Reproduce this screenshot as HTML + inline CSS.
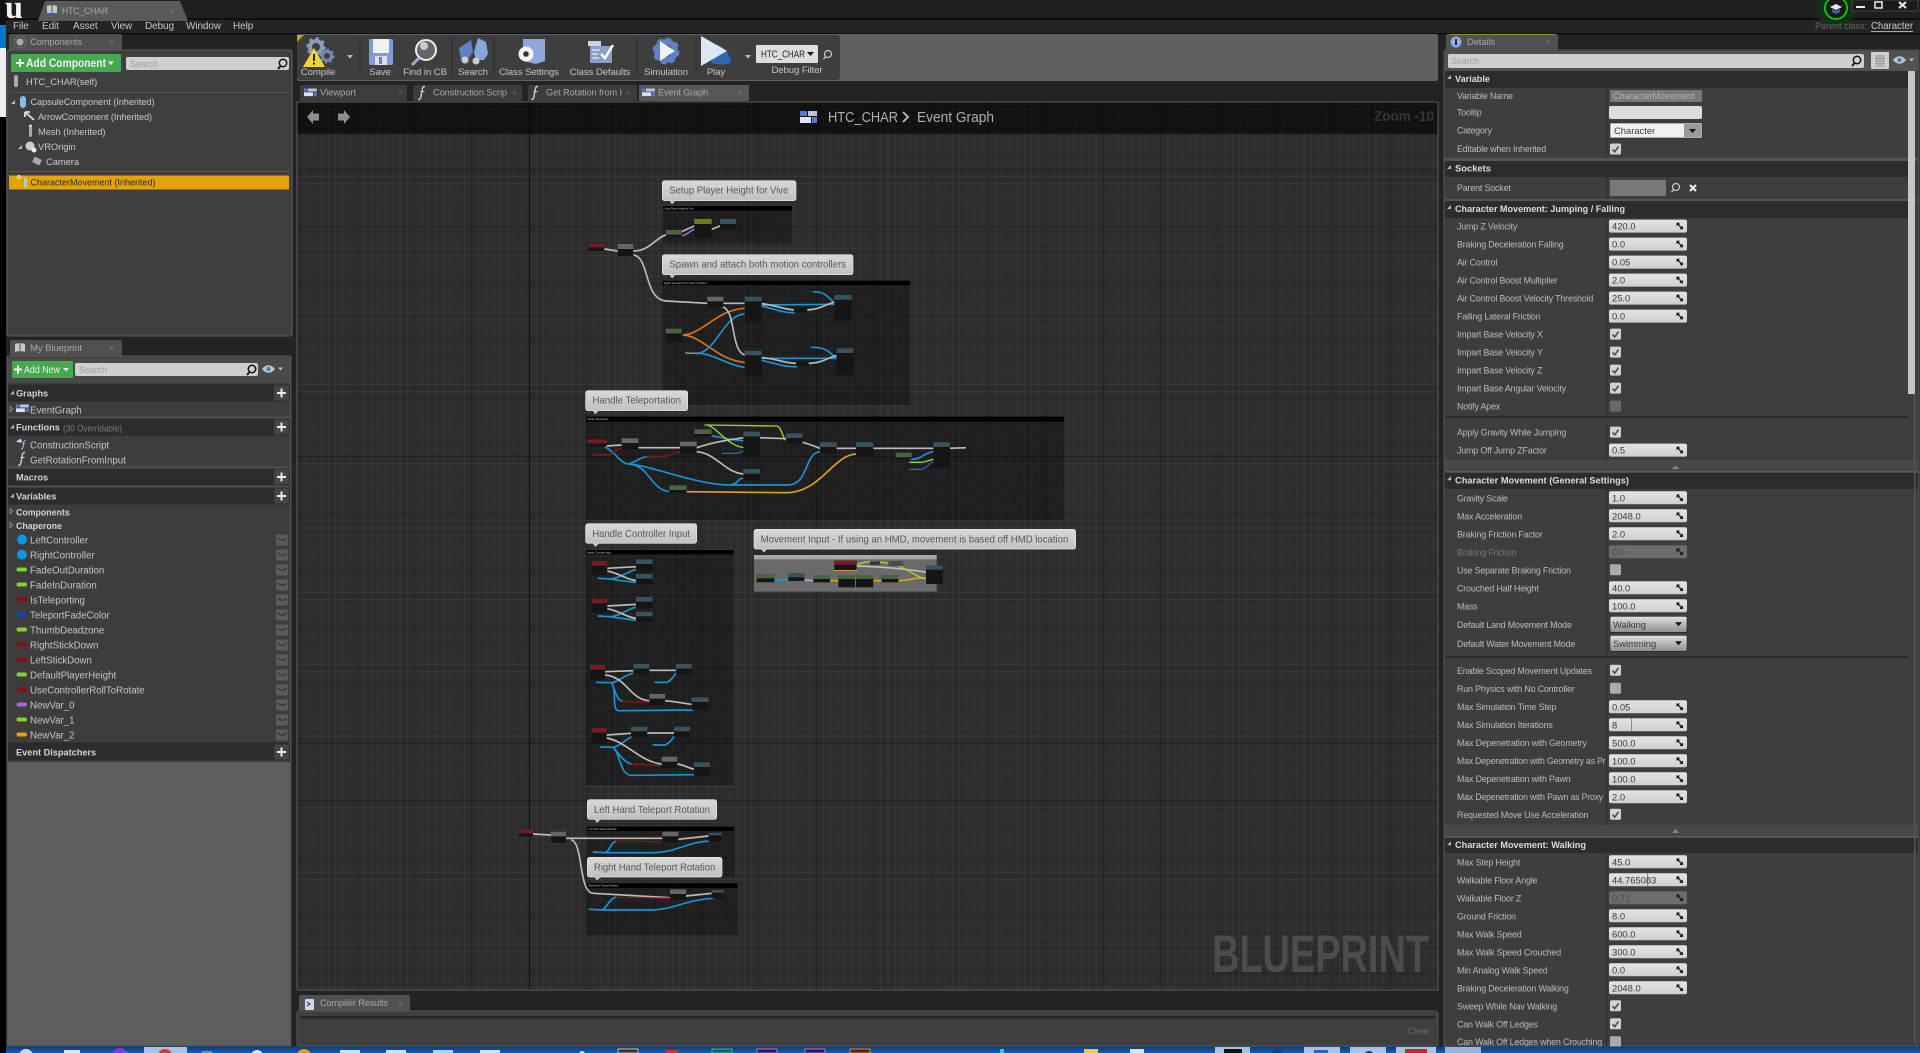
<!DOCTYPE html>
<html lang="en"><head><meta charset="utf-8"><title>HTC_CHAR</title>
<style>
html,body{margin:0;padding:0;background:#000;overflow:hidden}
svg{display:block}
text{font-family:"Liberation Sans",sans-serif;white-space:pre}
.m{font-size:10px;fill:#c6c6c6;letter-spacing:-.1px}
.t{font-size:9.5px;fill:#a8a8a8;letter-spacing:-.1px}
.c{font-size:9.4px;fill:#c8c8c8;letter-spacing:-.05px}
.s{font-size:9.7px;fill:#c6c6c6}
.h{font-size:9.2px;font-weight:bold;fill:#d4d4d4}
.tb{font-size:9.6px;fill:#c4c4c4;text-anchor:middle;letter-spacing:-.1px}
.l{font-size:8.9px;fill:#bcbcbc;letter-spacing:-.16px}
.v{font-size:9.4px;fill:#3a3a3a}
.d{font-size:9.5px;font-weight:bold;fill:#dcdcdc}
.w{fill:none;stroke:#bcbcbc;stroke-width:5;stroke-linecap:round}
.wb{fill:none;stroke:#1b93d3;stroke-width:5;stroke-linecap:round}
.wo{fill:none;stroke:#d9741f;stroke-width:5;stroke-linecap:round}
.wg{fill:none;stroke:#a3d23a;stroke-width:4;stroke-linecap:round}
.wr{fill:none;stroke:#8c1519;stroke-width:4;stroke-linecap:round}
.wy{fill:none;stroke:#dca020;stroke-width:5;stroke-linecap:round}
.wd{fill:none;stroke:#2a62c0;stroke-width:4;stroke-linecap:round}
.b{fill:#151515}.hg{fill:#666}.hb{fill:#38525f}.hn{fill:#4a6343}.hr{fill:#741c22}.hy{fill:#77771c}
.cm{fill:rgba(0,0,0,.3)}.ch{fill:#000}
.ct{font-size:7px;fill:#ccc}
.bt{font-size:29px;fill:#565656}
.sec{fill:#2c2c2c}
</style></head><body>
<svg xmlns="http://www.w3.org/2000/svg" width="1920" height="1053" viewBox="0 0 1920 1053">
<defs>
<pattern id="fine" patternUnits="userSpaceOnUse" x="529" y="169" width="7.175" height="7.175"><path d="M0 0H7.175M0 0V7.175" stroke="#3f3f3f" stroke-width="1" fill="none"/></pattern>
<pattern id="major" patternUnits="userSpaceOnUse" x="529" y="169" width="57.4" height="57.4"><path d="M0 0H57.4M0 0V57.4" stroke="#191919" stroke-width="1.2" fill="none"/></pattern>
<linearGradient id="fld" x1="0" y1="0" x2="0" y2="1"><stop offset="0" stop-color="#e4e4e4"/><stop offset="1" stop-color="#cfcfcf"/></linearGradient>
<linearGradient id="dd" x1="0" y1="0" x2="0" y2="1"><stop offset="0" stop-color="#e2e2e2"/><stop offset="1" stop-color="#8e8e8e"/></linearGradient>
<linearGradient id="bub" x1="0" y1="0" x2="0" y2="1"><stop offset="0" stop-color="#d8d8d8"/><stop offset="1" stop-color="#bdbdbd"/></linearGradient>
<linearGradient id="tbar" x1="0" y1="0" x2="0" y2="1"><stop offset="0" stop-color="#0a3a80"/><stop offset="1" stop-color="#1564ae"/></linearGradient>
<g id="arw"><path d="M0 0h3.5l-1.2 1.2 1.4 1.4-1 1-1.4-1.4L0 3.5zM6.5 6.5H3l1.2-1.2-1.4-1.4 1-1 1.4 1.4 1.2-1.2z" fill="#111"/></g>
<g id="n"><rect width="78" height="13" rx="2" fill="url(#fld)"/><use href="#arw" x="67.5" y="3.2"/></g>
<g id="nd"><rect width="78" height="13" rx="2" fill="#6c6c6c"/><use href="#arw" x="67.5" y="3.2"/></g>
<g id="cb"><rect width="11" height="11" rx="1.5" fill="#d2d2d2"/><path d="M2.5 6l2.2 2.3L8.6 3" stroke="#4a4a4a" stroke-width="1.6" fill="none"/></g>
<g id="cu"><rect width="11" height="11" rx="1.5" fill="#ababab"/></g>
<g id="cd"><rect width="11" height="11" rx="1.5" fill="#6a6a6a"/></g>
<g id="dp"><rect width="77" height="16" rx="1.5" fill="url(#dd)" stroke="#222" stroke-width=".6"/><path d="M65 6h7l-3.500 4z" fill="#111"/></g>
<g id="plus"><rect width="15" height="15" rx="1" fill="#444"/><path d="M7.500 3v9M3 7.500h9" stroke="#eee" stroke-width="2"/></g>
<g id="eyeb"><rect width="12" height="11" rx="1" fill="#5b5b5b"/><path d="M2 3.500c3 3 6 3 8.500 0" stroke="#2b2b2b" stroke-width="1" fill="none"/></g>
<g id="tri"><path d="M0 4L4 0v4z" fill="#bbb"/></g>
<g id="trr"><path d="M0 0l3 2.500L0 5z" fill="none" stroke="#999" stroke-width=".8"/></g>
<g id="mag"><circle cx="6" cy="5" r="3.700" fill="none" stroke="#111" stroke-width="1.500"/><path d="M3.500 8L1 11" stroke="#111" stroke-width="1.800"/></g>
<g id="magl"><circle cx="6" cy="5" r="3.500" fill="none" stroke="#ccc" stroke-width="1.200"/><path d="M3.500 7.800L1.500 10" stroke="#ccc" stroke-width="1.400"/></g>
<g id="eye"><path d="M0 4c4-5 9-5 13 0c-4 5-9 5-13 0z" fill="#bfc6d4"/><circle cx="6.500" cy="4" r="2.200" fill="#5878a8"/><path d="M16 2.500h5l-2.500 3z" fill="#bbb"/></g>
<g id="grd"><rect width="3" height="3" fill="#5878d8"/><rect x="3.800" width="9" height="3" fill="#b8c4e4"/><rect y="3.800" width="9" height="3.800" fill="#d8e0f4"/><rect x="9.800" y="3.800" width="3" height="3.800" fill="#5878d8"/></g>
<g id="fn"><path d="M7 0C4 0 4.500 2 4 4.500L2.800 11C2.500 12.500 1.500 13 0 13" fill="none" stroke="#c7d0ea" stroke-width="1.400"/><path d="M2.500 5h4" stroke="#c7d0ea" stroke-width="1"/></g>
<g id="bk"><path d="M0 1c2-1 4-1 5 0c1-1 3-1 5 0v8c-2-1-4-1-5 0c-1-1-3-1-5 0z" fill="#c8c8c8"/><path d="M5 1v8" stroke="#555"/></g>
</defs>

<rect width="1920" height="1053" fill="#232323"/>
<!-- title / menu -->
<rect width="1920" height="18" fill="#1f1f1f"/>
<rect y="18" width="1920" height="2" fill="#0e0e0e"/>
<rect y="20" width="1920" height="13" fill="#242424"/>
<rect y="33" width="1920" height="1.500" fill="#0c0c0c"/>
<rect x="0" y="25" width="6" height="23" fill="#0a74cc"/>
<rect x="0" y="48" width="6" height="69" fill="#eeeeee"/>
<rect x="0" y="117" width="6" height="936" fill="#000"/>
<rect x="0" y="0" width="6" height="25" fill="#111"/>
<text x="5" y="18" font-size="33" font-weight="bold" style="font-family:'Liberation Serif',serif" fill="#f2f2f2" textLength="18" lengthAdjust="spacingAndGlyphs">u</text>
<path d="M38 21L45 1H180L188 21z" fill="#5a5a5a"/>
<use href="#bk" x="47" y="5"/><rect x="47" y="13" width="10" height="2" fill="#3a5caa"/>
<text class="t" x="62" y="14" fill="#a0a0a0" textLength="46" lengthAdjust="spacingAndGlyphs">HTC_CHAR</text>
<text x="170" y="14" font-size="9" fill="#7d7d7d">×</text>
<text class="m" x="13" y="29">File</text><text class="m" x="42" y="29">Edit</text><text class="m" x="73" y="29">Asset</text><text class="m" x="111" y="29">View</text><text class="m" x="145" y="29">Debug</text><text class="m" x="186" y="29">Window</text><text class="m" x="233" y="29">Help</text>
<!-- top right -->
<circle cx="1836" cy="8" r="20" fill="#0e3a10" opacity=".6"/><circle cx="1836" cy="8" r="11" fill="#1b1b1b" stroke="#14b814" stroke-width="2"/>
<path d="M1830 7l6-3 6 3-6 3z" fill="#dfe8f4"/><path d="M1832 9v3l4 2 4-2V9l-4 2z" fill="#3a6ab0"/>
<rect x="1852" y="0" width="66" height="11" fill="#1a1a1a" stroke="#555" stroke-width=".7"/>
<rect x="1856" y="6" width="9" height="2" fill="#eee"/><rect x="1875" y="2" width="7" height="6" fill="none" stroke="#eee" stroke-width="1.500"/>
<path d="M1899 2l7 6M1906 2l-7 6" stroke="#eee" stroke-width="2"/>
<text x="1815" y="29" font-size="9.5" fill="#686868" textLength="52" lengthAdjust="spacingAndGlyphs">Parent class:</text>
<text x="1871" y="29" font-size="10" fill="#cfcfcf" textLength="42" lengthAdjust="spacingAndGlyphs">Character</text>
<rect x="1871" y="31" width="42" height="1" fill="#aaa"/>

<!-- Components panel -->
<path d="M9 50V36q0-2 2-2H120q2 0 2 2V50z" fill="#505050"/>
<circle cx="20" cy="42" r="3.500" fill="#aaa"/><circle cx="20" cy="42" r="6" fill="none" stroke="#888" stroke-dasharray="1.500 2"/>
<text class="t" x="30" y="45" fill="#b4b4b4" textLength="52" lengthAdjust="spacingAndGlyphs">Components</text>
<text x="109" y="45" font-size="9" fill="#777">×</text>
<rect x="7" y="50" width="285" height="286" rx="2" fill="#3f3f3f" stroke="#5c5c5c"/>
<rect x="11" y="54" width="110" height="18" rx="1.500" fill="#46a94f"/>
<path d="M16 63h8M20 59v8" stroke="#f2f2f2" stroke-width="2"/>
<text x="26" y="67" font-size="12" font-weight="bold" fill="#f0f0f0" textLength="80" lengthAdjust="spacingAndGlyphs">Add Component</text>
<path d="M108 61.500h6l-3 3.500z" fill="#f0f0f0"/>
<rect x="126" y="57" width="163" height="13" rx="2" fill="#cfcfcf"/>
<text x="130" y="67" font-size="9.500" fill="#9d9d9d" textLength="28" lengthAdjust="spacingAndGlyphs">Search</text>
<use href="#mag" x="277" y="58"/>
<rect x="14" y="75" width="4" height="12" rx="2" fill="#aaa"/>
<text class="c" x="26" y="85">HTC_CHAR(self)</text>
<rect x="10" y="92" width="279" height="1" fill="#555"/>
<use href="#tri" x="11" y="100"/>
<rect x="20" y="96" width="6" height="12" rx="3" fill="#8fb8e8"/>
<text class="c" x="30.500" y="105" textLength="124" lengthAdjust="spacingAndGlyphs">CapsuleComponent (Inherited)</text>
<path d="M25 112l9 8M25 112h5M25 112v5" stroke="#ddd" stroke-width="1.800" fill="none"/>
<text class="c" x="38" y="120" textLength="114" lengthAdjust="spacingAndGlyphs">ArrowComponent (Inherited)</text>
<rect x="29" y="127" width="3" height="10" rx="1.500" fill="#9ab79a"/><circle cx="30.500" cy="126" r="1.500" fill="#ddd"/>
<text class="c" x="38" y="135">Mesh (Inherited)</text>
<use href="#tri" x="18" y="145"/>
<circle cx="30" cy="146" r="4.500" fill="#ccc"/><circle cx="34" cy="150" r="2.500" fill="#eee"/>
<text class="c" x="38" y="150">VROrigin</text>
<rect x="33" y="158" width="8" height="6" fill="#aaa" transform="rotate(25 37 161)"/>
<text class="c" x="46" y="165">Camera</text>
<rect x="10" y="171" width="279" height="1" fill="#555"/>
<rect x="9" y="175.500" width="280" height="14" fill="#e2a408"/>
<circle cx="19" cy="177" r="1.500" fill="none" stroke="#eee"/><rect x="24" y="178" width="3" height="10" rx="1.500" fill="#aed2c0"/>
<text x="30.500" y="185.500" font-size="9.400" fill="#2d2d2d" textLength="125" lengthAdjust="spacingAndGlyphs">CharacterMovement (Inherited)</text>

<!-- My Blueprint -->
<path d="M10 356V342q0-2 2-2H120q2 0 2 2V356z" fill="#505050"/>
<use href="#bk" x="15" y="343"/>
<text class="t" x="30" y="351" fill="#b4b4b4" textLength="52" lengthAdjust="spacingAndGlyphs">My Blueprint</text>
<text x="109" y="351" font-size="9" fill="#777">×</text>
<rect x="7" y="356" width="284" height="690" fill="#5f5f5f" stroke="#4a4a4a"/>
<rect x="8" y="357" width="282" height="405" fill="#3d3d3d"/>
<rect x="8" y="358" width="282" height="25" fill="#4a4a4a"/>
<rect x="12" y="361" width="61" height="17" rx="1" fill="#46a94f"/>
<path d="M14 369.500h8M18 365.500v8" stroke="#f2f2f2" stroke-width="2"/>
<text x="24" y="373" font-size="10.500" fill="#eee" textLength="36" lengthAdjust="spacingAndGlyphs">Add New</text>
<path d="M63 368h6l-3 3.500z" fill="#eee"/>
<rect x="75" y="363" width="183" height="13" rx="2" fill="#cfcfcf"/>
<text x="79" y="373" font-size="9.500" fill="#9d9d9d" textLength="28" lengthAdjust="spacingAndGlyphs">Search</text>
<use href="#mag" x="246" y="364"/>
<use href="#eye" x="262" y="365"/>

<g transform="translate(0 -.5)">
<rect class="sec" x="8" y="385" width="282" height="17"/><use href="#tri" x="10" y="391"/><text class="h" x="16" y="397">Graphs</text><use href="#plus" x="274" y="386"/>
<use href="#trr" x="10" y="407"/><use href="#grd" x="16" y="405"/><text class="s" x="30" y="414">EventGraph</text>
<rect x="8" y="417" width="282" height="2" fill="#4f4f4f"/>
<rect class="sec" x="8" y="419" width="282" height="17"/><use href="#tri" x="10" y="425"/><text class="h" x="16" y="431">Functions</text><text x="63" y="432" font-size="9" fill="#7b7b7b" textLength="59" lengthAdjust="spacingAndGlyphs">(30 Overridable)</text><use href="#plus" x="274" y="420"/>
<path d="M16 442l5-3 1 4-3 0z" fill="#cbd3ea"/><g transform="translate(21 441) scale(.65)"><use href="#fn"/></g><text class="s" x="30" y="449">ConstructionScript</text>
<use href="#fn" x="18" y="453"/><text class="s" x="30" y="464">GetRotationFromInput</text>
<rect x="8" y="467" width="282" height="2" fill="#4f4f4f"/>
<rect class="sec" x="8" y="469" width="282" height="17"/><text class="h" x="16" y="481">Macros</text><use href="#plus" x="274" y="470"/>
<rect x="8" y="486" width="282" height="2" fill="#4f4f4f"/>
<rect class="sec" x="8" y="488" width="282" height="17"/><use href="#tri" x="10" y="494"/><text class="h" x="16" y="500">Variables</text><use href="#plus" x="274" y="489"/>
<use href="#trr" x="10" y="509"/><text class="h" x="16" y="516" style="font-size:8.8px">Components</text>
<use href="#trr" x="10" y="523"/><text class="h" x="16" y="529.500" style="font-size:8.8px">Chaperone</text>
<circle cx="22" cy="540" r="5" fill="#0c93ec"/><text class="s" x="30" y="544">LeftController</text><use href="#eyeb" x="276" y="535"/>
<circle cx="22" cy="555" r="5" fill="#0c93ec"/><text class="s" x="30" y="559">RightController</text><use href="#eyeb" x="276" y="550"/>
<rect x="16.500" y="568" width="10.500" height="4" rx="2" fill="#85d42a"/><text class="s" x="30" y="574">FadeOutDuration</text><use href="#eyeb" x="276" y="565"/>
<rect x="16.500" y="583" width="10.500" height="4" rx="2" fill="#85d42a"/><text class="s" x="30" y="589">FadeInDuration</text><use href="#eyeb" x="276" y="580"/>
<rect x="16.500" y="598" width="10.500" height="4" rx="2" fill="#8a0f10"/><text class="s" x="30" y="604">IsTeleporting</text><use href="#eyeb" x="276" y="595"/>
<rect x="16.500" y="613" width="10.500" height="4" rx="2" fill="#0d47b8"/><text class="s" x="30" y="619">TeleportFadeColor</text><use href="#eyeb" x="276" y="610"/>
<rect x="16.500" y="628" width="10.500" height="4" rx="2" fill="#85d42a"/><text class="s" x="30" y="634">ThumbDeadzone</text><use href="#eyeb" x="276" y="625"/>
<rect x="16.500" y="643" width="10.500" height="4" rx="2" fill="#8a0f10"/><text class="s" x="30" y="649">RightStickDown</text><use href="#eyeb" x="276" y="640"/>
<rect x="16.500" y="658" width="10.500" height="4" rx="2" fill="#8a0f10"/><text class="s" x="30" y="664">LeftStickDown</text><use href="#eyeb" x="276" y="655"/>
<rect x="16.500" y="673" width="10.500" height="4" rx="2" fill="#85d42a"/><text class="s" x="30" y="679">DefaultPlayerHeight</text><use href="#eyeb" x="276" y="670"/>
<rect x="16.500" y="688" width="10.500" height="4" rx="2" fill="#8a0f10"/><text class="s" x="30" y="694">UseControllerRollToRotate</text><use href="#eyeb" x="276" y="685"/>
<rect x="16.500" y="703" width="10.500" height="4" rx="2" fill="#a866d8"/><text class="s" x="30" y="709">NewVar_0</text><use href="#eyeb" x="276" y="700"/>
<rect x="16.500" y="718" width="10.500" height="4" rx="2" fill="#85d42a"/><text class="s" x="30" y="724">NewVar_1</text><use href="#eyeb" x="276" y="715"/>
<rect x="16.500" y="733" width="10.500" height="4" rx="2" fill="#e6a010"/><text class="s" x="30" y="739">NewVar_2</text><use href="#eyeb" x="276" y="730"/>
<rect class="sec" x="8" y="743" width="282" height="18"/><text class="h" x="16" y="756">Event Dispatchers</text><use href="#plus" x="274" y="745"/>
</g>

<!-- toolbar -->
<rect x="297" y="34" width="1141" height="47" rx="2" fill="#606060"/>
<rect x="297" y="35" width="543" height="45" rx="3" fill="#3e3e3e"/>
<path d="M297 35h7l-7 7z" fill="#c8a020"/>
<path d="M360 38v38M452 38v38M494 38v38M637 38v38M696 38v38" stroke="#2c2c2c"/>
<circle cx="316" cy="47" r="6" fill="none" stroke="#8c9cb8" stroke-width="4"/><circle cx="316" cy="47" r="8.500" fill="none" stroke="#8c9cb8" stroke-width="2.500" stroke-dasharray="3 3.600"/><circle cx="327" cy="56" r="4.500" fill="none" stroke="#7888a8" stroke-width="3"/><circle cx="327" cy="56" r="6.500" fill="none" stroke="#7888a8" stroke-width="2" stroke-dasharray="2.500 2.500"/>
<path d="M303 67l11-19 11 19z" fill="#f3d637"/><rect x="313" y="54" width="2" height="7" fill="#222"/><rect x="313" y="62.500" width="2" height="2" fill="#222"/>
<path d="M347 55h6l-3 3.500z" fill="#bbb"/>
<rect x="369" y="39" width="24" height="26" rx="1.500" fill="#7f9ad8"/><rect x="373" y="39" width="16" height="14" fill="#f0f0f0"/><rect x="375" y="56" width="12" height="9" fill="#dde"/><rect x="379" y="57" width="3" height="7" fill="#7080a8"/>
<circle cx="426" cy="50" r="10" fill="#666" stroke="#eee" stroke-width="2"/><circle cx="424" cy="46" r="4" fill="#ccc"/><path d="M419 58l-7 7" stroke="#9ab0dc" stroke-width="3"/>
<path d="M459 48l12-8 2 12-4 6-8 2z" fill="#5f82c4"/><path d="M474 52l4-14 8 4 2 12-4 6-8 0z" fill="#86a6de"/><circle cx="465" cy="60" r="3.500" fill="#ccc"/><circle cx="476" cy="61" r="3.500" fill="#ccc"/>
<path d="M523 39h22v22l-9 3-13-3z" fill="#8fa8dc"/><circle cx="526" cy="54" r="7.500" fill="#f4f4f4"/><circle cx="526" cy="54" r="2.800" fill="#333"/>
<rect x="590" y="46" width="22" height="17" fill="#8a9ec6"/><rect x="588" y="41" width="13" height="5" fill="#cbd3e6"/><path d="M601 54l4 4 8-13" stroke="#fff" stroke-width="2.500" fill="none"/><path d="M592 50h8M592 54h6M592 58h7" stroke="#dde" stroke-width="1.500"/>
<circle cx="666" cy="51" r="9" fill="none" stroke="#5f82c4" stroke-width="6"/><circle cx="666" cy="51" r="12" fill="none" stroke="#5f82c4" stroke-width="3" stroke-dasharray="5 4.400"/><path d="M660 41l15 10-15 10z" fill="#eef2fa"/>
<path d="M716 44c10 3 14 12 15 18c-3 3-12 3-20 1z" fill="#2f66b0"/><path d="M701 38l26 15-26 15z" fill="#dfe7f4" transform="translate(0 -2)"/>
<path d="M745 55h6l-3 3.500z" fill="#bbb"/>
<rect x="756" y="45" width="62" height="18" rx="1" fill="#dedede"/>
<text x="761" y="57.500" font-size="9.800" fill="#222" textLength="44" lengthAdjust="spacingAndGlyphs">HTC_CHAR</text><path d="M807 52h7l-3.500 4z" fill="#111"/>
<use href="#magl" x="822" y="49"/>
<text class="tb" x="318" y="75">Compile</text><text class="tb" x="380" y="75">Save</text><text class="tb" x="425" y="75">Find in CB</text><text class="tb" x="473" y="75">Search</text><text class="tb" x="529" y="75">Class Settings</text><text class="tb" x="600" y="75">Class Defaults</text><text class="tb" x="666" y="75">Simulation</text><text class="tb" x="716" y="75">Play</text><text class="tb" x="797" y="73">Debug Filter</text>

<!-- graph tabs -->
<rect x="300" y="85" width="107" height="16" rx="1" fill="#3c3c3c"/><rect x="413" y="85" width="109" height="16" rx="1" fill="#3c3c3c"/><rect x="528" y="85" width="109" height="16" rx="1" fill="#3c3c3c"/><rect x="639" y="85" width="110" height="16" rx="1" fill="#575757"/>
<use href="#grd" x="304" y="88.500"/><text class="t" x="320" y="95.500" fill="#b6b6b6" textLength="36" lengthAdjust="spacingAndGlyphs">Viewport</text><text x="398" y="96" font-size="9" fill="#666">×</text>
<use href="#fn" x="418" y="86.500"/><text class="t" x="433" y="95.500" fill="#b6b6b6" textLength="74" lengthAdjust="spacingAndGlyphs">Construction Scrip</text><text x="512" y="96" font-size="9" fill="#666">×</text>
<use href="#fn" x="531" y="86.500"/><text class="t" x="546" y="95.500" fill="#b6b6b6" textLength="76" lengthAdjust="spacingAndGlyphs">Get Rotation from I</text><text x="626" y="96" font-size="9" fill="#666">×</text>
<use href="#grd" x="642" y="88.500"/><text class="t" x="658" y="95.500" fill="#c4c4c4" textLength="50" lengthAdjust="spacingAndGlyphs">Event Graph</text><text x="737" y="96" font-size="9" fill="#7a7a7a">×</text>

<!-- graph -->
<rect x="297" y="102" width="1141" height="888" fill="#2c2c2c"/>
<rect x="297" y="102" width="1141" height="888" fill="url(#fine)"/>
<rect x="297" y="102" width="1141" height="888" fill="url(#major)"/>
<rect x="529" y="102" width="1" height="888" fill="#101010"/>
<rect x="297" y="102" width="1141" height="32" fill="#000" opacity=".6"/>
<rect x="297" y="102" width="1141" height="888" fill="none" stroke="#5c5c5c"/>
<path d="M313 110l-6 7 6 7v-3.500h6v-7h-6z" fill="#8d8d8d"/>
<path d="M344 110l6 7-6 7v-3.500h-6v-7h6z" fill="#8d8d8d"/>
<rect x="800" y="111" width="7" height="5" fill="#5878d8"/><rect x="808" y="111" width="9" height="5" fill="#b8c4e4"/><rect x="800" y="117" width="11" height="6" fill="#dde4f6"/><rect x="812" y="117" width="5" height="6" fill="#5878d8"/>
<text x="828" y="122" font-size="14.500" fill="#b0b0b0" textLength="70" lengthAdjust="spacingAndGlyphs">HTC_CHAR</text>
<path d="M903 112l5 5-5 5" fill="none" stroke="#c0c0c0" stroke-width="1.800"/>
<text x="917" y="122" font-size="14.500" fill="#b0b0b0" textLength="77" lengthAdjust="spacingAndGlyphs">Event Graph</text>
<text x="1374" y="121" font-size="15" font-weight="bold" fill="#353535" textLength="60" lengthAdjust="spacingAndGlyphs">Zoom -10</text>
<text x="1212" y="972" font-size="53" font-weight="bold" fill="#4c4c4c" textLength="217" lengthAdjust="spacingAndGlyphs">BLUEPRINT</text>

<!-- graph contents upper -->
<g transform="translate(570 170) scale(.33333)">
<rect class="cm" x="280" y="108" width="385" height="112"/><rect class="ch" x="280" y="108" width="385" height="14"/><text class="ct" x="283" y="119">Setup Player Height for Vive</text>
<rect class="cm" x="278" y="332" width="742" height="373"/><rect class="ch" x="278" y="332" width="742" height="13"/><text class="ct" x="282" y="342">Spawn and attach both motion controllers</text>
<rect class="cm" x="48" y="740" width="1434" height="310"/><rect class="ch" x="48" y="740" width="1434" height="15"/><text class="ct" x="51" y="750">Handle Teleportation</text>

<path class="w" d="M103 237L143 243M190 243C240 243 260 200 288 195M335 185L373 168M425 178L450 168M190 255C240 260 220 390 290 393L412 400"/>
<path d="M335 198C350 195 360 182 373 178" fill="none" stroke="#c070e8" stroke-width="4"/>
<rect class="b" x="55" y="222" width="48" height="21"/><rect class="hr" x="55" y="222" width="48" height="10"/>
<rect class="b" x="143" y="222" width="47" height="36"/><rect class="hg" x="143" y="222" width="47" height="15"/>
<rect class="b" x="288" y="180" width="47" height="20"/><rect class="hn" x="288" y="180" width="47" height="14"/>
<rect class="b" x="373" y="147" width="52" height="58"/><rect class="hy" x="373" y="147" width="52" height="15"/>
<rect class="b" x="450" y="147" width="48" height="33"/><rect class="hb" x="450" y="147" width="48" height="15"/>

<path class="wo" d="M340 495C400 490 440 420 524 415M340 495C400 500 440 570 524 577"/>
<path class="wb" d="M382 550C440 545 460 435 524 432M382 550C430 550 470 585 524 592M568 405L793 403M570 407C610 415 640 430 675 428M570 565L800 565M570 570C620 580 640 592 680 590M730 365C770 365 775 385 795 400M725 532C770 532 775 545 800 565"/>
<path class="w" d="M460 400L524 400M568 400C620 405 640 420 680 420M710 420C750 420 770 400 793 397M456 410C500 420 480 540 524 555M568 562C620 565 640 580 680 580M712 580C760 580 775 560 800 557"/>
<path d="M345 549L382 550" stroke="#9aa" stroke-width="4"/>
<rect class="b" x="412" y="380" width="48" height="32"/><rect class="hg" x="412" y="380" width="48" height="14"/>
<rect class="b" x="524" y="380" width="51" height="75"/><rect class="hb" x="524" y="380" width="51" height="14"/>
<rect class="b" x="793" y="375" width="52" height="77"/><rect class="hb" x="793" y="375" width="52" height="14"/>
<rect class="b" x="288" y="476" width="47" height="39"/><rect class="hn" x="288" y="476" width="47" height="14"/>
<rect class="b" x="524" y="542" width="51" height="75"/><rect class="hb" x="524" y="542" width="51" height="14"/>
<rect class="b" x="800" y="535" width="50" height="80"/><rect class="hb" x="800" y="535" width="50" height="14"/>
<rect class="b" x="672" y="414" width="40" height="14"/><rect class="b" x="678" y="574" width="38" height="14"/>

<path class="wb" d="M105 830C140 850 150 880 175 882C240 885 380 945 480 945L650 945C720 945 700 850 750 845M175 882C240 885 240 960 300 965M175 882C200 875 210 862 230 860M480 945C510 940 500 925 520 925M415 797C460 800 470 810 520 812M1020 868C1060 868 1060 848 1090 845"/>
<path class="wr" d="M272 860C300 860 300 850 330 845M112 855C130 855 140 835 155 835"/>
<path class="wd" d="M457 850L500 850C510 850 515 845 522 842M1020 898L1050 898C1070 898 1075 880 1090 875"/>
<path class="wy" d="M345 965L650 968C750 968 790 855 858 852"/>
<path class="w" d="M110 828L155 825M205 833L330 833M380 833C420 820 440 815 520 803M380 845C440 850 460 905 520 912M565 803L620 805C660 805 700 815 750 835M800 835L858 835M905 835L1090 835M1135 835L1190 833"/>
<path class="wg" d="M405 765C440 765 470 830 525 833M405 765L620 768C635 770 635 800 648 810M1020 877L1050 877C1070 877 1075 870 1090 868"/>
<rect class="b" x="52" y="808" width="58" height="22"/><rect class="hr" x="52" y="808" width="58" height="12"/>
<rect class="b" x="155" y="805" width="50" height="33"/><rect class="hg" x="155" y="805" width="50" height="14"/>
<rect class="b" x="330" y="815" width="50" height="35"/><rect class="hg" x="330" y="815" width="50" height="14"/>
<rect class="b" x="373" y="778" width="52" height="22"/><rect class="hn" x="373" y="778" width="52" height="14"/>
<rect class="b" x="520" y="785" width="50" height="75"/><rect class="hb" x="520" y="785" width="50" height="14"/>
<rect class="b" x="520" y="897" width="50" height="33"/><rect class="hb" x="520" y="897" width="50" height="14"/>
<rect class="b" x="648" y="790" width="50" height="30"/><rect class="hb" x="648" y="790" width="50" height="14"/>
<rect class="b" x="750" y="817" width="50" height="33"/><rect class="hb" x="750" y="817" width="50" height="14"/>
<rect class="b" x="858" y="817" width="52" height="43"/><rect class="hb" x="858" y="817" width="52" height="14"/>
<rect class="b" x="1090" y="817" width="50" height="76"/><rect class="hb" x="1090" y="817" width="50" height="14"/>
<rect class="b" x="977" y="848" width="48" height="20"/><rect class="hn" x="977" y="848" width="48" height="14"/>
<rect class="b" x="298" y="946" width="52" height="22"/><rect class="hn" x="298" y="946" width="52" height="14"/>
<rect class="hr" x="230" y="857" width="42" height="6"/><rect class="hr" x="68" y="851" width="44" height="6"/><rect x="1188" y="825" width="42" height="14" fill="#281a1a"/>

<path d="M277 40q0-8 8-8H670q8 0 8 8V84q0 8-8 8H315l-9 9-6-9H285q-8 0-8-8z" fill="url(#bub)" stroke="#e8e8e8" stroke-width="2"/>
<text class="bt" x="298" y="71" textLength="357" lengthAdjust="spacingAndGlyphs">Setup Player Height for Vive</text>
<path d="M277 262q0-8 8-8H841q8 0 8 8V306q0 8-8 8H315l-9 9-6-9H285q-8 0-8-8z" fill="url(#bub)" stroke="#e8e8e8" stroke-width="2"/>
<text class="bt" x="298" y="293" textLength="530" lengthAdjust="spacingAndGlyphs">Spawn and attach both motion controllers</text>
<path d="M47 670q0-8 8-8H345q8 0 8 8V714q0 8-8 8H85l-9 9-6-9H55q-8 0-8-8z" fill="url(#bub)" stroke="#e8e8e8" stroke-width="2"/>
<text class="bt" x="67" y="701" textLength="266" lengthAdjust="spacingAndGlyphs">Handle Teleportation</text>
</g>

<!-- graph contents lower -->
<g transform="translate(570 510) scale(.33333)">
<rect class="cm" x="48" y="120" width="442" height="705"/><rect class="ch" x="48" y="120" width="442" height="13"/><text class="ct" x="51" y="130">Handle Controller Input</text>
<rect x="552" y="135" width="548" height="110" fill="#6a6a6a"/><rect x="552" y="135" width="548" height="13" fill="#a8a8a8"/>
<rect class="cm" x="52" y="950" width="441" height="150"/><rect class="ch" x="52" y="950" width="441" height="13"/><text class="ct" x="56" y="960">Left Hand Teleport Rotation</text>
<rect class="cm" x="50" y="1120" width="453" height="155"/><rect class="ch" x="50" y="1120" width="453" height="14"/><text class="ct" x="55" y="1130">Right Hand Teleport Rotation</text>

<!-- input groups -->
<path class="wb" d="M85 205L120 207C150 205 170 185 200 178M120 207C140 210 170 215 205 218M85 318L120 320C150 318 170 298 200 291M120 320C140 323 170 328 205 331"/>
<path class="w" d="M112 175L200 170M112 183C150 190 170 210 200 212M112 288L200 283M112 296C150 303 170 323 200 325"/>
<rect class="b" x="65" y="153" width="47" height="42"/><rect class="hr" x="65" y="153" width="47" height="14"/>
<rect class="b" x="198" y="148" width="50" height="34"/><rect class="hb" x="198" y="148" width="50" height="14"/>
<rect class="b" x="198" y="192" width="50" height="30"/><rect class="hb" x="198" y="192" width="50" height="14"/>
<rect class="b" x="65" y="266" width="47" height="42"/><rect class="hr" x="65" y="266" width="47" height="14"/>
<rect class="b" x="198" y="261" width="50" height="34"/><rect class="hb" x="198" y="261" width="50" height="14"/>
<rect class="b" x="198" y="305" width="50" height="30"/><rect class="hb" x="198" y="305" width="50" height="14"/>

<path class="wb" d="M80 517L125 518C150 515 160 495 190 490M255 517L290 517C300 515 310 500 318 490M125 518C140 540 125 600 145 602L370 600M125 518C135 540 140 570 155 573"/>
<path class="wr" d="M155 575L240 577"/>
<path class="w" d="M105 485L190 482M238 481L320 481M105 495C170 500 180 570 238 572M285 572C320 575 340 580 365 583"/>
<rect class="b" x="60" y="465" width="45" height="45"/><rect class="hr" x="60" y="465" width="45" height="14"/>
<rect class="b" x="190" y="462" width="48" height="30"/><rect class="hb" x="190" y="462" width="48" height="14"/>
<rect class="b" x="318" y="462" width="47" height="30"/><rect class="hb" x="318" y="462" width="47" height="14"/>
<rect class="b" x="238" y="552" width="47" height="33"/><rect class="hg" x="238" y="552" width="47" height="14"/>
<rect class="b" x="365" y="562" width="50" height="38"/><rect class="hb" x="365" y="562" width="50" height="14"/>

<path class="wb" d="M92 711L130 712C150 708 165 690 185 680M250 705L285 705C295 703 305 690 312 680M130 712C150 730 150 790 180 796L375 794M130 712C145 730 165 760 185 762"/>
<path class="wr" d="M185 762L275 767"/>
<path class="w" d="M110 675L183 670M232 669L312 669M110 684C170 695 210 755 275 762M322 762C345 765 355 775 372 777"/>
<rect class="b" x="65" y="654" width="45" height="44"/><rect class="hr" x="65" y="654" width="45" height="14"/>
<rect class="b" x="183" y="650" width="49" height="30"/><rect class="hb" x="183" y="650" width="49" height="14"/>
<rect class="b" x="312" y="650" width="48" height="30"/><rect class="hb" x="312" y="650" width="48" height="14"/>
<rect class="b" x="275" y="740" width="47" height="35"/><rect class="hg" x="275" y="740" width="47" height="15"/>
<rect class="b" x="372" y="757" width="48" height="40"/><rect class="hb" x="372" y="757" width="48" height="14"/>

<!-- movement input -->
<path class="wb" d="M613 212L655 208"/>
<path d="M703 210L730 212" stroke="#b0a8e8" stroke-width="5"/>
<path class="wy" d="M780 212L805 212M910 212L935 212M985 212C1020 212 1040 200 1070 205M795 180L860 180"/>
<path class="w" d="M860 168C920 170 1000 175 1070 187"/>
<path class="wg" d="M860 165C890 150 920 155 960 160C1010 170 1030 200 1070 207"/>
<rect class="b" x="560" y="193" width="53" height="24"/><rect class="hn" x="560" y="193" width="53" height="12"/>
<rect class="b" x="655" y="190" width="48" height="23"/><rect class="hb" x="655" y="190" width="48" height="12"/>
<rect class="b" x="730" y="195" width="50" height="22"/><rect class="hn" x="730" y="195" width="50" height="12"/>
<rect class="b" x="805" y="195" width="50" height="37"/><rect class="hn" x="805" y="195" width="50" height="12"/>
<rect class="b" x="858" y="195" width="52" height="37"/><rect class="hn" x="858" y="195" width="52" height="12"/>
<rect class="b" x="935" y="195" width="50" height="22"/><rect class="hn" x="935" y="195" width="50" height="12"/>
<rect class="b" x="793" y="152" width="67" height="28"/><rect class="hr" x="793" y="152" width="67" height="12"/>
<rect class="b" x="1068" y="167" width="50" height="55"/><rect class="hb" x="1068" y="167" width="50" height="12"/>
<rect x="900" y="154" width="30" height="10" fill="#333"/><rect x="955" y="154" width="45" height="14" fill="#4a4a4a"/>

<!-- left/right hand -->
<path class="w" d="M-111 972L-57 975M-15 985L5 985L280 985M325 988L415 978M5 990C40 1000 25 1148 70 1150L300 1163M348 1158L425 1150"/>
<path class="wr" d="M135 993L280 995M135 1162L300 1165"/>
<path class="wb" d="M70 1026L105 1028C120 1025 120 1000 135 995M105 1028L250 1028C320 1028 350 995 420 993M58 1198L95 1200C110 1195 115 1170 135 1162M95 1200L240 1200C310 1200 350 1168 430 1165"/>
<rect class="b" x="-153" y="960" width="42" height="20"/><rect class="hr" x="-153" y="960" width="42" height="10"/>
<rect class="b" x="-57" y="965" width="45" height="34"/><rect class="hg" x="-57" y="965" width="45" height="14"/>
<rect class="b" x="277" y="965" width="48" height="33"/><rect class="hg" x="277" y="965" width="48" height="14"/>
<rect class="b" x="415" y="968" width="40" height="27"/><rect class="hb" x="415" y="968" width="40" height="8"/>
<rect class="b" x="300" y="1138" width="48" height="30"/><rect class="hg" x="300" y="1138" width="48" height="14"/>
<rect class="b" x="425" y="1140" width="37" height="25"/><rect class="hb" x="425" y="1140" width="37" height="8"/>

<path d="M47 49q0-8 8-8H372q8 0 8 8V92q0 8-8 8H85l-9 9-6-9H55q-8 0-8-8z" fill="url(#bub)" stroke="#e8e8e8" stroke-width="2"/>
<text class="bt" x="67" y="81" textLength="293" lengthAdjust="spacingAndGlyphs">Handle Controller Input</text>
<path d="M552 66q0-8 8-8H1509q8 0 8 8V109q0 8-8 8H590l-9 9-6-9H560q-8 0-8-8z" fill="url(#bub)" stroke="#e8e8e8" stroke-width="2"/>
<text class="bt" x="572" y="97" textLength="923" lengthAdjust="spacingAndGlyphs">Movement Input - If using an HMD, movement is based off HMD location</text>
<path d="M52 877q0-8 8-8H432q8 0 8 8V920q0 8-8 8H90l-9 9-6-9H60q-8 0-8-8z" fill="url(#bub)" stroke="#e8e8e8" stroke-width="2"/>
<text class="bt" x="72" y="909" textLength="348" lengthAdjust="spacingAndGlyphs">Left Hand Teleport Rotation</text>
<path d="M52 1050q0-8 8-8H448q8 0 8 8V1093q0 8-8 8H90l-9 9-6-9H60q-8 0-8-8z" fill="url(#bub)" stroke="#e8e8e8" stroke-width="2"/>
<text class="bt" x="72" y="1082" textLength="364" lengthAdjust="spacingAndGlyphs">Right Hand Teleport Rotation</text>
</g>

<!-- compiler results -->
<path d="M299 1011V997q0-2 2-2H408q2 0 2 2V1011z" fill="#505050"/>
<rect x="305" y="999" width="9" height="11" rx="1" fill="#cfd9f0"/><path d="M307 1002l3 2-3 2" stroke="#223" fill="none"/>
<text class="t" x="320" y="1006" fill="#b8b8b8" textLength="68" lengthAdjust="spacingAndGlyphs">Compiler Results</text><text x="398" y="1006" font-size="9" fill="#777">×</text>
<rect x="297" y="1011" width="1141" height="35" rx="2" fill="#3f3f3f" stroke="#545454"/>
<rect x="301" y="1016" width="1134" height="2.500" fill="#262626"/>
<text x="1408" y="1034" font-size="9.500" fill="#6a6a6a" textLength="22" lengthAdjust="spacingAndGlyphs">Clear</text>

<!-- Details -->
<path d="M1446 50V36q0-2 2-2H1556q2 0 2 2V50z" fill="#505050"/><rect x="1450" y="34" width="105" height="1" fill="#a89020"/>
<circle cx="1456" cy="42" r="5.500" fill="#9ab0e0" stroke="#5878b8"/><rect x="1455" y="39" width="2" height="6" fill="#224"/>
<text class="t" x="1467" y="45" fill="#b8b8b8" textLength="28" lengthAdjust="spacingAndGlyphs">Details</text><text x="1545" y="45" font-size="9" fill="#777">×</text>
<rect x="1444" y="50" width="475" height="996" fill="#3e3e3e" stroke="#555"/>
<rect x="1445" y="51" width="473" height="20" fill="#525252"/>
<rect x="1448" y="54" width="416" height="14" rx="2" fill="#cfcfcf"/>
<text x="1451" y="64" font-size="9.500" fill="#9d9d9d" textLength="28" lengthAdjust="spacingAndGlyphs">Search</text>
<use href="#mag" x="1851" y="55"/>
<rect x="1871" y="52" width="18" height="17" rx="1" fill="#cfcfcf"/><path d="M1875 56h10M1875 58.500h10M1875 61h10M1875 63.500h10M1875 66h10M1877 55v11M1880 55v11M1883 55v11" stroke="#888" stroke-width=".7"/>
<use href="#eye" x="1893" y="56"/>

<!-- section bands -->
<rect class="sec" x="1445" y="71" width="463" height="17"/>
<rect x="1445" y="158" width="473" height="3" fill="#555"/>
<rect class="sec" x="1445" y="161" width="463" height="16"/>
<rect x="1445" y="199" width="473" height="2" fill="#555"/>
<rect class="sec" x="1445" y="201" width="463" height="17"/>
<rect x="1445" y="416" width="463" height="2" fill="#2c2c2c"/>
<rect x="1445" y="460" width="473" height="12" fill="#484848"/><rect x="1445" y="471" width="473" height="1.500" fill="#5e5e5e"/>
<path d="M1672 469l3.500-3.500 3.500 3.500zM1672 469.500h7" fill="#888"/>
<rect class="sec" x="1445" y="473" width="473" height="16"/>
<rect x="1445" y="656" width="463" height="2" fill="#2c2c2c"/>
<rect x="1445" y="825" width="473" height="12" fill="#484848"/><rect x="1445" y="836" width="473" height="1.500" fill="#5e5e5e"/>
<path d="M1672 833l3.500-4 3.500 4z" fill="#888"/>
<rect class="sec" x="1445" y="838" width="473" height="15"/>
<path d="M1606.500 88V158M1606.500 177V199M1606.500 218V416M1606.500 424V460M1606.500 489V656M1606.500 664V825M1606.500 853V1046" stroke="#2b2b2b"/>
<rect x="1908" y="71" width="7" height="323" fill="#c6c6c6"/>
<rect x="1914" y="394" width="1.500" height="650" fill="#555"/>

<use href="#tri" x="1447" y="75"/><text class="d" x="1455" y="82" textLength="35" lengthAdjust="spacingAndGlyphs">Variable</text>
<use href="#tri" x="1447" y="165"/><text class="d" x="1455" y="171.500" textLength="36" lengthAdjust="spacingAndGlyphs">Sockets</text>
<use href="#tri" x="1447" y="205"/><text class="d" x="1455" y="212" textLength="170" lengthAdjust="spacingAndGlyphs">Character Movement: Jumping / Falling</text>

<text class="l" x="1457" y="99">Variable Name</text><rect x="1610" y="90" width="92" height="12" fill="#787878"/><text x="1613" y="99" font-size="9" fill="#b4b4b4">CharacterMovement</text>
<text class="l" x="1457" y="115.500">Tooltip</text><rect x="1609" y="106" width="93" height="13" rx="2" fill="#dcdcdc"/>
<text class="l" x="1457" y="133.500">Category</text><rect x="1610" y="123" width="92" height="15" fill="#f0f0f0" stroke="#222" stroke-width=".6"/><rect x="1684" y="124" width="17" height="13" fill="#9a9a9a"/><path d="M1689 129h7l-3.500 4z" fill="#111"/><text class="v" x="1614" y="134">Character</text>
<text class="l" x="1457" y="152">Editable when Inherited</text><use href="#cb" x="1610" y="143.500"/>
<text class="l" x="1457" y="191">Parent Socket</text><rect x="1610" y="180" width="56" height="16" fill="#787878"/><use href="#magl" x="1670" y="182"/><path d="M1690 185l6 6M1696 185l-6 6" stroke="#f0f0f0" stroke-width="2"/>

<g transform="translate(0 -.4)">
<text class="l" x="1457" y="230">Jump Z Velocity</text><use href="#n" x="1609" y="220"/><text class="v" x="1612" y="230">420.0</text>
<text class="l" x="1457" y="248">Braking Deceleration Falling</text><use href="#n" x="1609" y="238"/><text class="v" x="1612" y="248">0.0</text>
<text class="l" x="1457" y="266">Air Control</text><use href="#n" x="1609" y="256"/><text class="v" x="1612" y="266">0.05</text>
<text class="l" x="1457" y="284">Air Control Boost Multiplier</text><use href="#n" x="1609" y="274"/><text class="v" x="1612" y="284">2.0</text>
<text class="l" x="1457" y="302">Air Control Boost Velocity Threshold</text><use href="#n" x="1609" y="292"/><text class="v" x="1612" y="302">25.0</text>
<text class="l" x="1457" y="320">Falling Lateral Friction</text><use href="#n" x="1609" y="310"/><text class="v" x="1612" y="320">0.0</text>
<text class="l" x="1457" y="338">Impart Base Velocity X</text><use href="#cb" x="1610" y="329"/>
<text class="l" x="1457" y="356">Impart Base Velocity Y</text><use href="#cb" x="1610" y="347"/>
<text class="l" x="1457" y="374">Impart Base Velocity Z</text><use href="#cb" x="1610" y="365"/>
<text class="l" x="1457" y="392">Impart Base Angular Velocity</text><use href="#cb" x="1610" y="383"/>
<text class="l" x="1457" y="410">Notify Apex</text><use href="#cd" x="1610" y="401"/>
<text class="l" x="1457" y="436">Apply Gravity While Jumping</text><use href="#cb" x="1610" y="427"/>
<text class="l" x="1457" y="454">Jump Off Jump ZFactor</text><use href="#n" x="1609" y="444"/><text class="v" x="1612" y="454">0.5</text>
</g>

<g transform="translate(0 -.7)">
<use href="#tri" x="1447" y="477"/><text class="d" x="1455" y="484" textLength="174" lengthAdjust="spacingAndGlyphs">Character Movement (General Settings)</text>
<use href="#tri" x="1447" y="842"/><text class="d" x="1455" y="848.600" textLength="131" lengthAdjust="spacingAndGlyphs">Character Movement: Walking</text>
<text class="l" x="1457" y="502">Gravity Scale</text><use href="#n" x="1609" y="492"/><text class="v" x="1612" y="502">1.0</text>
<text class="l" x="1457" y="520">Max Acceleration</text><use href="#n" x="1609" y="510"/><text class="v" x="1612" y="520">2048.0</text>
<text class="l" x="1457" y="538">Braking Friction Factor</text><use href="#n" x="1609" y="528"/><text class="v" x="1612" y="538">2.0</text>
<text class="l" x="1457" y="556" style="fill:#777">Braking Friction</text><use href="#nd" x="1609" y="546"/><text class="v" x="1612" y="556" style="fill:#4a4a4a">0.0</text>
<text class="l" x="1457" y="574">Use Separate Braking Friction</text><use href="#cu" x="1610" y="565"/>
<text class="l" x="1457" y="592">Crouched Half Height</text><use href="#n" x="1609" y="582"/><text class="v" x="1612" y="592">40.0</text>
<text class="l" x="1457" y="610">Mass</text><use href="#n" x="1609" y="600"/><text class="v" x="1612" y="610">100.0</text>
<text class="l" x="1457" y="628.500">Default Land Movement Mode</text><use href="#dp" x="1610" y="617"/><text class="v" x="1613" y="628.500">Walking</text>
<text class="l" x="1457" y="647.500">Default Water Movement Mode</text><use href="#dp" x="1610" y="636"/><text class="v" x="1613" y="647.500">Swimming</text>
<text class="l" x="1457" y="674.500">Enable Scoped Movement Updates</text><use href="#cb" x="1610" y="665.500"/>
<text class="l" x="1457" y="692.500">Run Physics with No Controller</text><use href="#cu" x="1610" y="683.500"/>
<text class="l" x="1457" y="710.500">Max Simulation Time Step</text><use href="#n" x="1609" y="701"/><text class="v" x="1612" y="711">0.05</text>
<text class="l" x="1457" y="728.500">Max Simulation Iterations</text><use href="#n" x="1609" y="719"/><rect x="1631" y="719" width="1" height="13" fill="#888"/><text class="v" x="1612" y="729">8</text>
<text class="l" x="1457" y="746.500">Max Depenetration with Geometry</text><use href="#n" x="1609" y="737"/><text class="v" x="1612" y="747">500.0</text>
<text class="l" x="1457" y="764.500" textLength="148.500" lengthAdjust="spacingAndGlyphs">Max Depenetration with Geometry as Pr</text><use href="#n" x="1609" y="755"/><text class="v" x="1612" y="765">100.0</text>
<text class="l" x="1457" y="782.500">Max Depenetration with Pawn</text><use href="#n" x="1609" y="773"/><text class="v" x="1612" y="783">100.0</text>
<text class="l" x="1457" y="800.500" textLength="146" lengthAdjust="spacingAndGlyphs">Max Depenetration with Pawn as Proxy</text><use href="#n" x="1609" y="791"/><text class="v" x="1612" y="801">2.0</text>
<text class="l" x="1457" y="818.500">Requested Move Use Acceleration</text><use href="#cb" x="1610" y="809.500"/>

<text class="l" x="1457" y="866">Max Step Height</text><use href="#n" x="1609" y="856"/><text class="v" x="1612" y="866">45.0</text>
<text class="l" x="1457" y="884">Walkable Floor Angle</text><use href="#n" x="1609" y="874"/><rect x="1647" y="874" width="1" height="13" fill="#888"/><text class="v" x="1612" y="884">44.765083</text>
<text class="l" x="1457" y="902">Walkable Floor Z</text><use href="#nd" x="1609" y="892"/><text class="v" x="1612" y="902" style="fill:#4a4a4a">0.71</text>
<text class="l" x="1457" y="920">Ground Friction</text><use href="#n" x="1609" y="910"/><text class="v" x="1612" y="920">8.0</text>
<text class="l" x="1457" y="938">Max Walk Speed</text><use href="#n" x="1609" y="928"/><text class="v" x="1612" y="938">600.0</text>
<text class="l" x="1457" y="956">Max Walk Speed Crouched</text><use href="#n" x="1609" y="946"/><text class="v" x="1612" y="956">300.0</text>
<text class="l" x="1457" y="974">Min Analog Walk Speed</text><use href="#n" x="1609" y="964"/><text class="v" x="1612" y="974">0.0</text>
<text class="l" x="1457" y="992">Braking Deceleration Walking</text><use href="#n" x="1609" y="982"/><text class="v" x="1612" y="992">2048.0</text>
<text class="l" x="1457" y="1010">Sweep While Nav Walking</text><use href="#cb" x="1610" y="1001"/>
<text class="l" x="1457" y="1028">Can Walk Off Ledges</text><use href="#cb" x="1610" y="1019"/>
<text class="l" x="1457" y="1045.500">Can Walk Off Ledges when Crouching</text><use href="#cu" x="1610" y="1037"/>
</g>

<!-- taskbar -->
<rect x="6" y="1046.500" width="1914" height="7" fill="url(#tbar)"/>
<circle cx="26" cy="1056" r="7" fill="#cfd8e2"/><rect x="64" y="1050" width="16" height="4" fill="#dde8f4"/><circle cx="120" cy="1056" r="8" fill="#7a40d8"/><circle cx="126" cy="1057" r="5" fill="#20a0e0"/>
<rect x="144" y="1047" width="43" height="6" fill="#a8c4e4"/><circle cx="165" cy="1056" r="7" fill="#d83a30"/>
<rect x="202" y="1051" width="10" height="3" fill="#888"/><circle cx="257" cy="1056" r="6" fill="#e8e8e8"/><circle cx="304" cy="1056" r="7" fill="#e89a18"/><circle cx="304" cy="1056" r="3" fill="#eee"/>
<rect x="340" y="1050" width="20" height="4" fill="#cfe4ee"/><rect x="386" y="1050" width="20" height="4" fill="#cfe4ee"/><rect x="433" y="1050" width="20" height="4" fill="#a8d8e8"/><rect x="480" y="1050" width="20" height="4" fill="#cfe4ee"/>
<circle cx="582" cy="1054" r="3" fill="#ddd"/><rect x="618" y="1049" width="20" height="4" fill="#333" stroke="#ddd" stroke-width=".8"/><rect x="666" y="1050" width="12" height="4" fill="#d03030"/>
<rect x="712" y="1049" width="20" height="4" fill="#186060" stroke="#40c0d0" stroke-width=".8"/><rect x="757" y="1049" width="20" height="4" fill="#301850" stroke="#c090e0" stroke-width=".8"/><rect x="805" y="1049" width="20" height="4" fill="#301850" stroke="#c090e0" stroke-width=".8"/><rect x="850" y="1049" width="20" height="4" fill="#602010" stroke="#e8a040" stroke-width=".8"/>
<rect x="1000" y="1049" width="4" height="5" fill="#40c8c0"/><rect x="1084" y="1049" width="14" height="5" fill="#f0c840"/><rect x="1130" y="1049" width="14" height="5" fill="#d8e0f0"/>
<rect x="1215" y="1047" width="35" height="6" fill="#a8c4e4"/><rect x="1224" y="1049" width="18" height="4" fill="#111"/><circle cx="1277" cy="1056" r="6" fill="#1a3a70"/>
<rect x="1304" y="1047" width="36" height="6" fill="#a8c4e4"/><rect x="1314" y="1050" width="14" height="4" fill="#2068c0"/>
<rect x="1350" y="1047" width="36" height="6" fill="#a8c4e4"/><circle cx="1369" cy="1056" r="5" fill="#1a3a70"/>
<rect x="1396" y="1047" width="40" height="6" fill="#a8c4e4"/><rect x="1405" y="1049" width="22" height="4" fill="#c02828"/>
<rect x="1445" y="1047" width="36" height="6" fill="#98b4d8"/>
</svg>
</body></html>
